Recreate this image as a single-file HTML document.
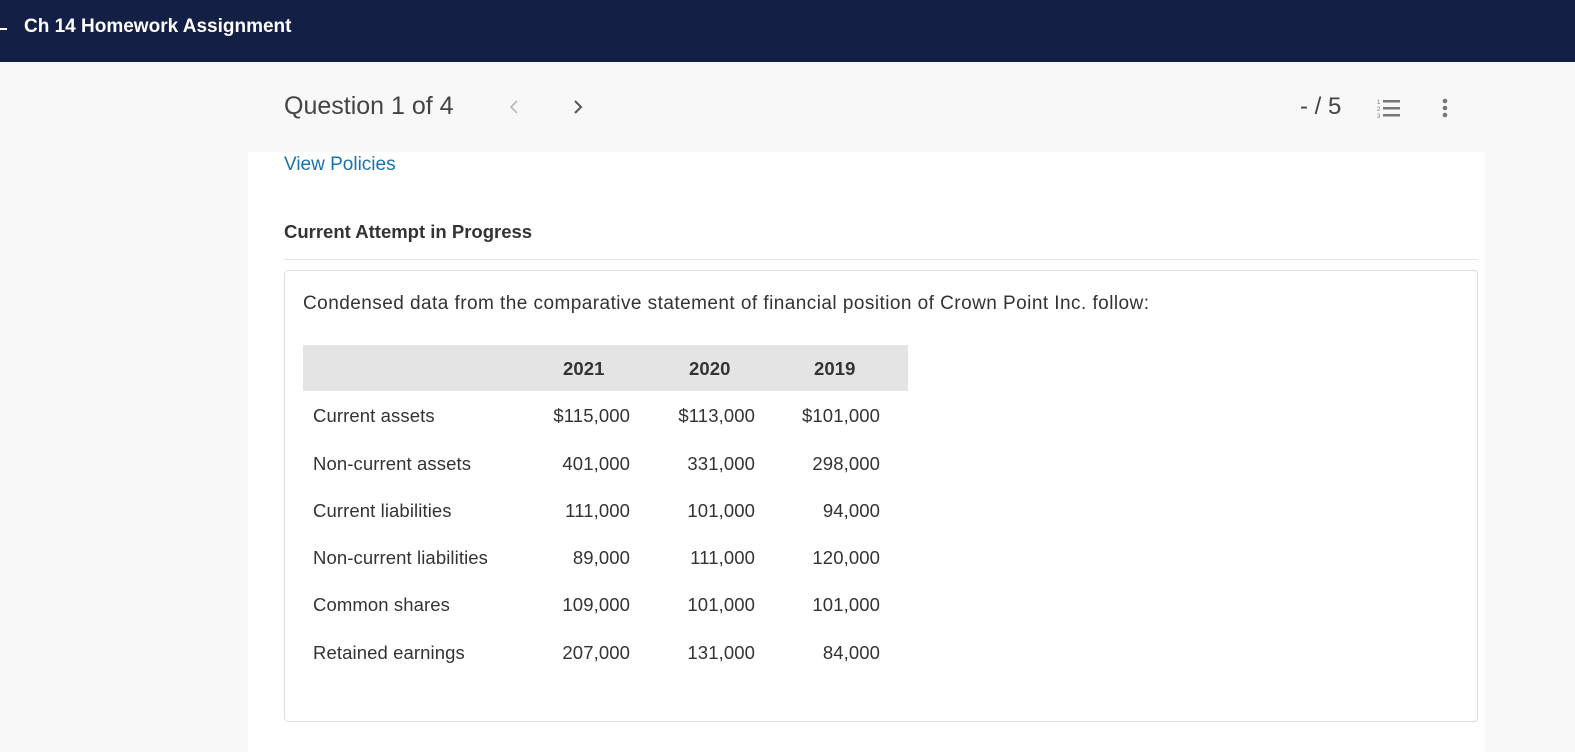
<!DOCTYPE html>
<html><head><style>
body{margin:0;width:1575px;height:726px;background:#f8f8f8;font-family:"Liberation Sans",sans-serif;position:relative;overflow:hidden;color:#333}
.nav{position:absolute;left:0;top:0;width:1575px;height:62px;background:#141f45}
.nav .t{position:absolute;left:24px;top:16px;color:#fff;font-weight:bold;font-size:19px}
.nav .d{position:absolute;left:0;top:28px;width:7px;height:2px;background:#fff}
.white{position:absolute;left:248px;top:152px;width:1237px;height:600px;background:#fff}
.abs{position:absolute}
.card{position:absolute;left:284px;top:270px;width:1192px;height:450px;border:1px solid #ddd;border-radius:4px;background:#fff}
.hdr{position:absolute;left:303px;top:345px;width:605px;height:46px;background:#e4e4e4}
.c{position:absolute;font-size:18.5px;color:#333;letter-spacing:0.1px}
.r{text-align:right;width:130px}
</style></head><body>
<div class="nav"><div class="d"></div><div class="t">Ch 14 Homework Assignment</div></div>
<div class="abs" style="left:284px;top:92px;font-size:25px;color:#444">Question 1 of 4</div>
<svg class="abs" style="left:508px;top:98px" width="12" height="18"><path d="M9 3L3 9L9 15" fill="none" stroke="#bbb" stroke-width="1.8"/></svg>
<svg class="abs" style="left:572px;top:98px" width="12" height="18"><path d="M3 3L9 9L3 15" fill="none" stroke="#555" stroke-width="2"/></svg>
<div class="abs" style="left:1300px;top:93px;font-size:24px;color:#444">- / 5</div>
<svg class="abs" style="left:1375px;top:96px" width="30" height="24"><g fill="#777"><rect x="8" y="4" width="17" height="2.5"/><rect x="8" y="11" width="17" height="2.5"/><rect x="8" y="18" width="17" height="2.5"/></g><g font-size="6" fill="#777" font-family="Liberation Sans"><text x="2" y="8">1</text><text x="2" y="15">2</text><text x="2" y="22">3</text></g></svg>
<svg class="abs" style="left:1440px;top:96px" width="10" height="24"><g fill="#777"><circle cx="5" cy="5" r="2.3"/><circle cx="5" cy="12" r="2.3"/><circle cx="5" cy="19" r="2.3"/></g></svg>
<div class="white"></div>
<div class="abs" style="left:284px;top:154px;font-size:19px;color:#1a73a8">View Policies</div>
<div class="abs" style="left:284px;top:221px;font-size:18.5px;font-weight:bold;color:#333">Current Attempt in Progress</div>
<div class="abs" style="left:284px;top:259px;width:1194px;height:1px;background:#e6e6e6"></div>
<div class="card"></div>
<div class="abs" style="left:303px;top:293px;font-size:19px;letter-spacing:0.45px;color:#333">Condensed data from the comparative statement of financial position of Crown Point Inc. follow:</div>
<div class="hdr"></div>
<div class="c" style="left:563px;top:358px;font-weight:bold">2021</div>
<div class="c" style="left:689px;top:358px;font-weight:bold">2020</div>
<div class="c" style="left:814px;top:358px;font-weight:bold">2019</div>
<div class="c" style="left:313px;top:405px">Current assets</div>
<div class="c r" style="left:500px;top:405px">$115,000</div><div class="c r" style="left:625px;top:405px">$113,000</div><div class="c r" style="left:750px;top:405px">$101,000</div>
<div class="c" style="left:313px;top:453px">Non-current assets</div>
<div class="c r" style="left:500px;top:453px">401,000</div><div class="c r" style="left:625px;top:453px">331,000</div><div class="c r" style="left:750px;top:453px">298,000</div>
<div class="c" style="left:313px;top:500px">Current liabilities</div>
<div class="c r" style="left:500px;top:500px">111,000</div><div class="c r" style="left:625px;top:500px">101,000</div><div class="c r" style="left:750px;top:500px">94,000</div>
<div class="c" style="left:313px;top:547px">Non-current liabilities</div>
<div class="c r" style="left:500px;top:547px">89,000</div><div class="c r" style="left:625px;top:547px">111,000</div><div class="c r" style="left:750px;top:547px">120,000</div>
<div class="c" style="left:313px;top:594px">Common shares</div>
<div class="c r" style="left:500px;top:594px">109,000</div><div class="c r" style="left:625px;top:594px">101,000</div><div class="c r" style="left:750px;top:594px">101,000</div>
<div class="c" style="left:313px;top:642px">Retained earnings</div>
<div class="c r" style="left:500px;top:642px">207,000</div><div class="c r" style="left:625px;top:642px">131,000</div><div class="c r" style="left:750px;top:642px">84,000</div>
</body></html>
